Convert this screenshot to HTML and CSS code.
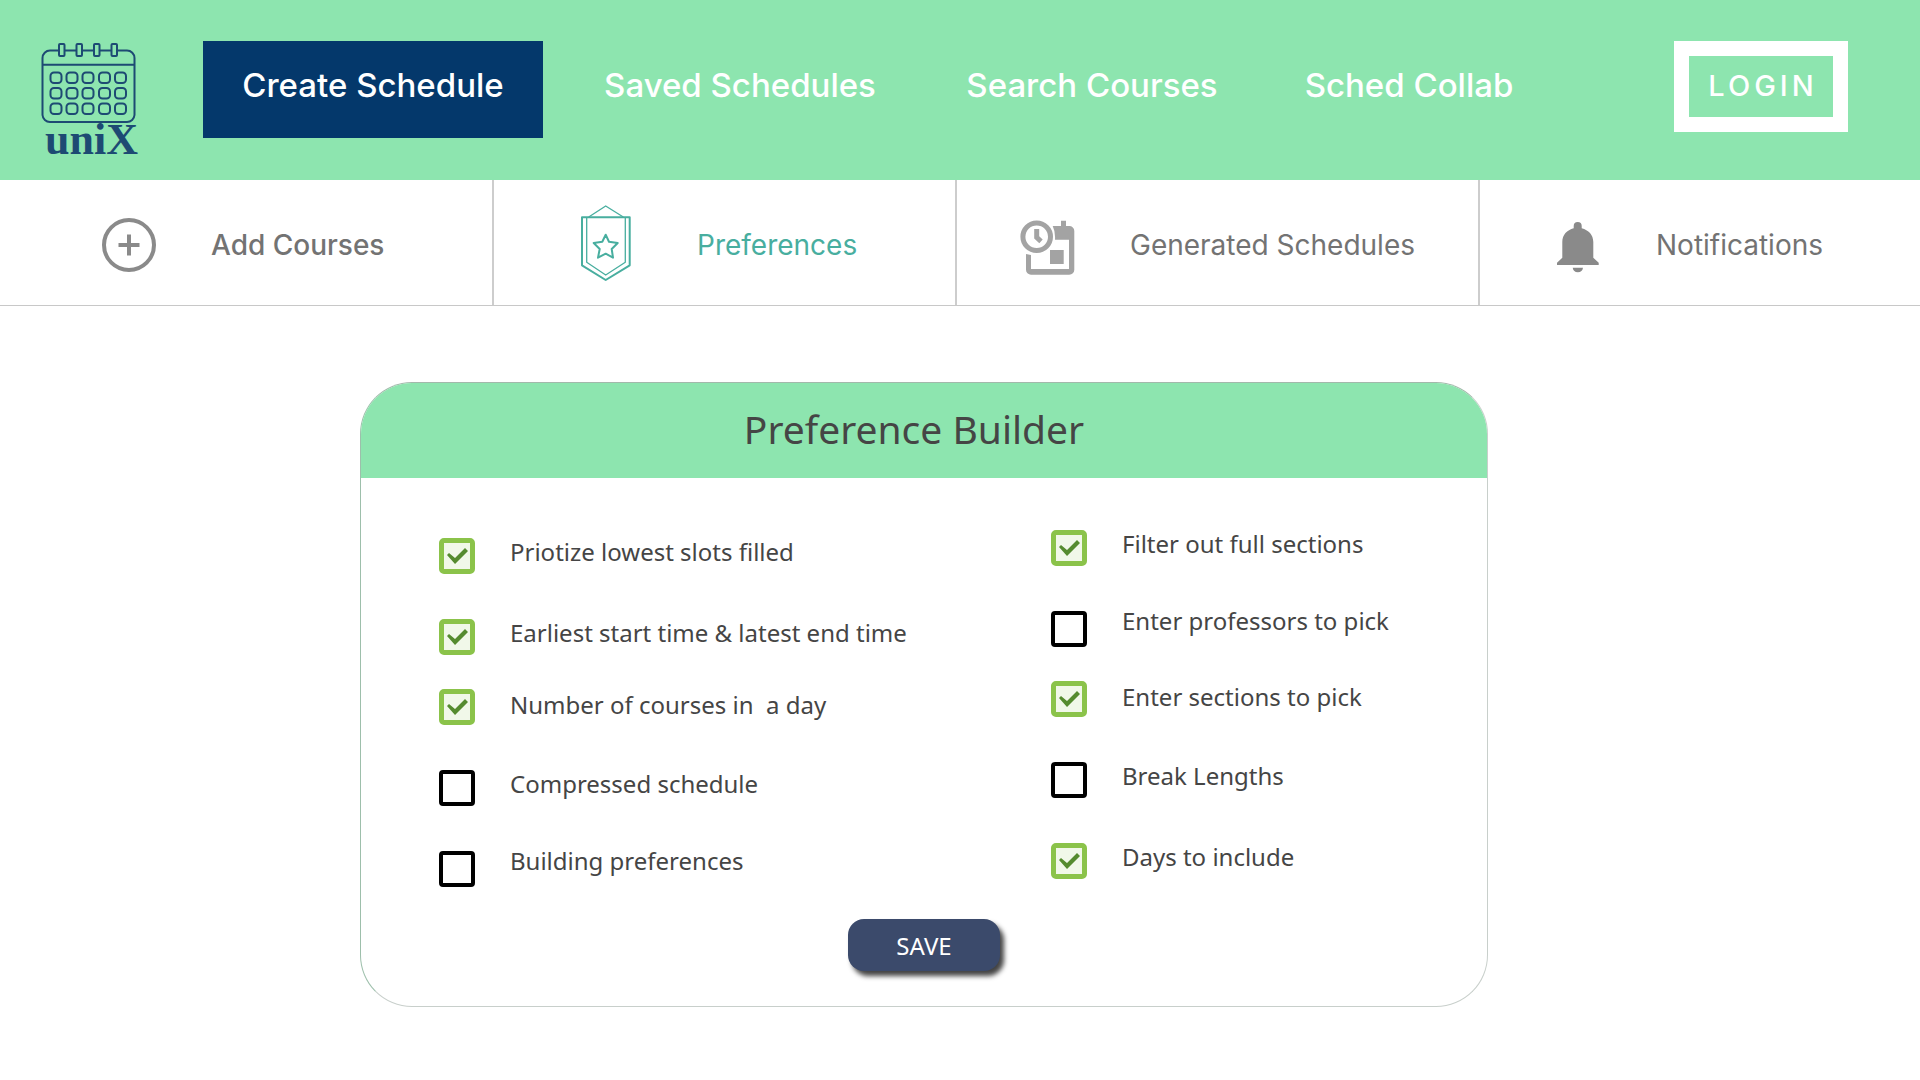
FILE: index.html
```html
<!DOCTYPE html>
<html lang="en">
<head>
<meta charset="utf-8">
<meta name="viewport" content="width=device-width, initial-scale=1">
<title>uniX – Preferences</title>
<link rel="stylesheet" href="styles.css">
</head>
<body>
<header class="topbar">
  <a class="logo" href="#">
    <svg class="logo-mark" viewBox="0 0 96 80" fill="none" stroke="currentColor" stroke-width="2" aria-hidden="true">
      <path d="M17 7.500H9a7.500 7.500 0 0 0-7.500 7.500v57a7.500 7.500 0 0 0 7.500 7h77a7.500 7.500 0 0 0 7.500-7V15a7.500 7.500 0 0 0-7.500-7.500h-9M24 7.500h11M41.500 7.500h11M59 7.500h11M1.500 21.700h92"/>
      <rect x="18" y="1" width="5.500" height="12" rx="1"/><rect x="35.500" y="1" width="5.500" height="12" rx="1"/><rect x="53" y="1" width="5.500" height="12" rx="1"/><rect x="70.500" y="1" width="5.500" height="12" rx="1"/>
      <g id="week">
        <rect x="9.500" y="29.500" width="11" height="10.500" rx="3.500"/><rect x="25.500" y="29.500" width="11" height="10.500" rx="3.500"/><rect x="41.500" y="29.500" width="11" height="10.500" rx="3.500"/><rect x="58" y="29.500" width="11" height="10.500" rx="3.500"/><rect x="74" y="29.500" width="11" height="10.500" rx="3.500"/>
      </g>
      <use href="#week" y="15.500"/><use href="#week" y="31"/>
    </svg>
    <span class="logo-name">uniX</span>
  </a>
  <nav class="tabs" aria-label="Main">
    <a class="tab tab-active" href="#">Create Schedule</a>
    <a class="tab" href="#">Saved Schedules</a>
    <a class="tab" href="#">Search Courses</a>
    <a class="tab" href="#">Sched Collab</a>
  </nav>
  <button class="login" type="button">LOGIN</button>
</header>

<nav class="steps" aria-label="Create schedule">
  <a class="step step-add" href="#">
    <svg class="step-icon" viewBox="0 0 56 56" fill="none" stroke="currentColor" stroke-width="4" aria-hidden="true"><circle cx="28" cy="28" r="25"/><path d="M28 17.500v21M17.500 28h21"/></svg>
    <span>Add Courses</span>
  </a>
  <a class="step step-preferences" href="#">
    <svg class="step-icon" viewBox="0 0 56 80" fill="none" stroke="currentColor" stroke-width="2" stroke-linejoin="round" aria-hidden="true"><path d="M5 12.300h47.700v48L28.700 75 5 60.300z"/><path stroke-width="1.300" d="M9.700 12.300v45l19 12.700 19.600-12.700v-45M11.700 12L28.700 1l17.600 11"/><path d="M28.700 29.700l3.300 7 8.700 1.300-6 6 1.300 8.700-7.300-4-7.700 4 1.700-8.700-6-6 8.600-1.300z"/></svg>
    <span>Preferences</span>
  </a>
  <a class="step step-generated" href="#">
    <svg class="step-icon" viewBox="0 0 56 60" aria-hidden="true"><g fill="none" stroke="currentColor" stroke-width="5"><circle cx="16.700" cy="21.700" r="13.800"/><path d="M16.700 14v8.300l4.300 4"/></g><path fill="currentColor" d="M32.700 11H41V5.700h5V11h3.300a5 5 0 0 1 5 5v38.700a5 5 0 0 1-5 5H11a5 5 0 0 1-5-5V39l5 1v14h38V24.700H35q.5-8-2.300-13.700zM30 35h13.700v14H30z"/></svg>
    <span>Generated Schedules</span>
  </a>
  <a class="step step-notifications" href="#">
    <svg class="step-icon" viewBox="0 0 56 60" fill="currentColor" aria-hidden="true"><path d="M23.700 13.300V11a4 4 0 0 1 8 0v2.300C38.500 15 43.300 20 43.300 27v15.700l5.400 5V50H7v-2.300l5.300-5V27c0-7 4.700-12 11.400-13.700zM22.700 52.700H33a5.200 5.200 0 0 1-10.300 0z"/></svg>
    <span>Notifications</span>
  </a>
</nav>

<main class="page">
  <form class="card">
    <h1 class="card-title">Preference Builder</h1>
    <div class="options">
      <div class="column column-first">
        <label class="option"><input type="checkbox" checked><span>Priotize lowest slots filled</span></label>
        <label class="option"><input type="checkbox" checked><span>Earliest start time &amp; latest end time</span></label>
        <label class="option option-tight"><input type="checkbox" checked><span>Number of courses in  a day</span></label>
        <label class="option"><input type="checkbox"><span>Compressed schedule</span></label>
        <label class="option option-raised"><input type="checkbox"><span>Building preferences</span></label>
      </div>
      <div class="column">
        <label class="option"><input type="checkbox" checked><span>Filter out full sections</span></label>
        <label class="option option-raised"><input type="checkbox"><span>Enter professors to pick</span></label>
        <label class="option option-tight"><input type="checkbox" checked><span>Enter sections to pick</span></label>
        <label class="option"><input type="checkbox"><span>Break Lengths</span></label>
        <label class="option"><input type="checkbox" checked><span>Days to include</span></label>
      </div>
    </div>
    <button class="save" type="submit">SAVE</button>
  </form>
</main>
</body>
</html>
```
FILE: styles.css
```css
* {
  box-sizing: border-box;
}

body {
  margin: 0;
  background: #fff;
  color: #454545;
  font-family: "Noto Sans", sans-serif;
}

a {
  color: inherit;
  text-decoration: none;
}

/* Top bar */
.topbar {
  display: grid;
  grid-template-columns: 203px 1fr 349px;
  align-items: start;
  padding: 41px 0 23px;
  background: #8de5af;
  color: #fff;
  font-family: Inter, sans-serif;
}

.logo {
  display: flex;
  flex-direction: column;
  padding: 2px 0 0 41px;
  color: #1d4a73;
}

.logo-mark {
  width: 96px;
  height: 80px;
}

.logo-name {
  padding-left: 4px;
  font: bold 44px/34px "Liberation Serif", serif;
}

.tabs {
  display: grid;
  grid-template-columns: 340fr 394fr 310fr 324fr;
}

.tab {
  padding-bottom: 9px;
  font-size: 33px;
  font-weight: 500;
  line-height: 88px;
  text-align: center;
  white-space: nowrap;
}

.tab-active {
  background: #04386b;
}

.login {
  justify-self: end;
  width: 174px;
  height: 91px;
  margin-right: 72px;
  padding: 0 0 2px 4px;
  border: 15px solid #fff;
  background: none;
  color: inherit;
  font: 500 29px Inter, sans-serif;
  letter-spacing: 4px;
}

/* Step bar */
.steps {
  display: grid;
  grid-template-columns: 494fr 463fr 523fr 440fr;
  border-bottom: 1px solid #c8c8c8;
  color: #737373;
  font: 28px/36px Inter, sans-serif;
}

.step {
  display: flex;
  align-items: center;
  gap: 54px;
  height: 125px;
  padding-top: 5px;
  border-right: 2px solid #cdcdcd;
  white-space: nowrap;
}

.step:last-child {
  border-right: 0;
}

.step-icon {
  flex: none;
  width: 56px;
}

.step-add {
  padding-left: 101px;
  font-weight: 500;
}

.step-add .step-icon,
.step-notifications .step-icon {
  color: #8a8a8a;
}

.step-preferences {
  gap: 64px;
  padding-left: 83px;
  color: #48ae9f;
}

.step-generated {
  padding-left: 63px;
}

.step-generated .step-icon {
  color: #a3a3a3;
}

.step-notifications {
  gap: 50px;
  padding-left: 70px;
}

/* Preference card */
.page {
  padding: 76px 22.5% 72px 18.75%;
}

.card {
  overflow: hidden;
  padding-bottom: 35px;
  border: 1px solid;
  border-color: #a3b8ab #c8cfcb #c8cfcb #9dbfab;
  border-radius: 52px;
}

.card-title {
  margin: 0;
  padding: 0 20px 4px 0;
  background: #8de5af;
  font-size: 39px;
  font-weight: 400;
  line-height: 91px;
  text-align: center;
}

.options {
  display: grid;
  grid-template-columns: 612fr 436fr;
  padding-left: 78px;
}

.column {
  display: flex;
  flex-direction: column;
  gap: 45px;
  padding-top: 52px;
}

.column-first {
  padding-top: 60px;
}

.option {
  display: flex;
  align-items: flex-start;
  gap: 35px;
  font-size: 24px;
  line-height: 28px;
  white-space: pre;
}

.option-tight {
  margin-top: -11px;
  line-height: 32px;
}

.option-raised {
  line-height: 20px;
}

.option input {
  appearance: none;
  flex: none;
  width: 36px;
  height: 36px;
  margin: 0;
  border: 4px solid #000;
  border-radius: 4px;
}

.option input:checked {
  border: 5px solid #8bc34a;
  border-radius: 5px;
  background: #f1f8e9;
}

.option input:checked::before {
  content: "";
  display: block;
  width: 26px;
  height: 26px;
  background: #558b2f;
  clip-path: polygon(3px 12px, 5px 10px, 11px 15px, 21px 5px, 24px 8px, 11px 21px);
}

.save {
  display: block;
  width: 152px;
  height: 52px;
  margin: 32px auto 0;
  padding: 0;
  border: 0;
  border-radius: 16px;
  background: #3b4a6b;
  box-shadow: 4px 5px 5px #444;
  color: #fff;
  font: 24px "Noto Sans", sans-serif;
}
```
